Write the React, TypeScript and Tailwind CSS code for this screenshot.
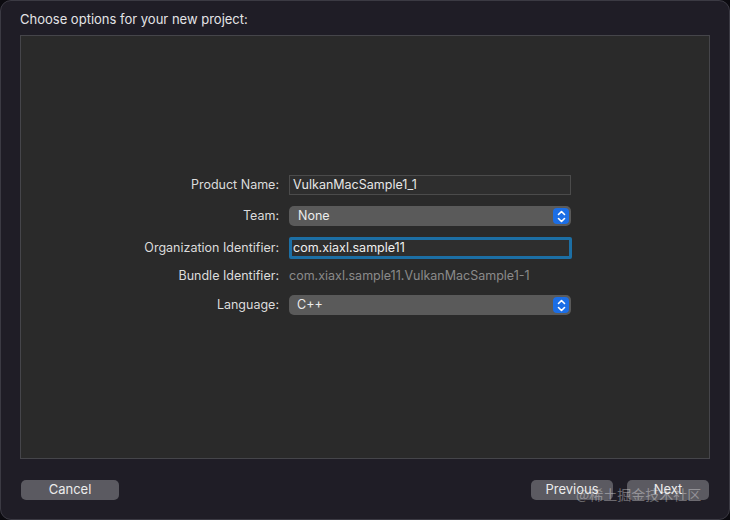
import React from "react";

function Stepper() {
  return (
    <div className="absolute right-[2px] top-[2px] bottom-[2px] w-[16px] rounded-[4px] bg-[#1b6ee6] flex items-center justify-center">
      <svg width="9" height="13" viewBox="0 0 9 13" fill="none" stroke="white" strokeWidth="1.6" strokeLinecap="round" strokeLinejoin="round">
        <path d="M1.5 4.5 L4.5 1.5 L7.5 4.5" />
        <path d="M1.5 8.5 L4.5 11.5 L7.5 8.5" />
      </svg>
    </div>
  );
}

function Label({ children }: { children: React.ReactNode }) {
  return <div className="w-[268px] text-right pr-[10px] text-[12.5px] text-[#dcdcdc]">{children}</div>;
}

export default function App() {
  return (
    <div className="w-[730px] h-[520px] bg-[#0c0b10] relative" style={{ fontFamily: "Inter, 'Noto Sans', sans-serif" }}>
      <div className="w-[730px] h-[520px] rounded-[11px] border border-[#3b3a43] bg-[#1f1d26] flex flex-col">
        <div className="h-[34px] pl-[19px] pt-[9px] text-[13px] text-[#e4e4e6]">Choose options for your new project:</div>
        <div className="mx-[19px] h-[424px] border border-[#45454a] bg-[#2a2a2a] flex flex-col pt-[139px]">
          <div className="flex items-center h-[20px]">
            <Label>Product Name:</Label>
            <div className="w-[282px] h-[20px] bg-[#2e2e2e] border border-[#4b4b4b] px-[3px] flex items-center text-[12.5px] text-[#e6e6e6]">VulkanMacSample1_1</div>
          </div>
          <div className="flex items-center h-[20px] mt-[11px]">
            <Label>Team:</Label>
            <div className="relative w-[282px] h-[20px] rounded-[5px] bg-[#5a5a5a] pl-[9px] flex items-center text-[12.5px] text-[#ececec]">
              None
              <Stepper />
            </div>
          </div>
          <div className="flex items-center h-[22px] mt-[11px]">
            <Label>Organization Identifier:</Label>
            <div className="w-[283px] h-[22px] bg-[#2e2e2e] border-[3px] border-[#1c6fa5] rounded-[2px] px-[1px] flex items-center text-[12.5px] text-[#f0f0f0]">com.xiaxl.sample11</div>
          </div>
          <div className="flex items-center h-[20px] mt-[7px]">
            <Label>Bundle Identifier:</Label>
            <div className="text-[12.5px] text-[#8a8a8a]">com.xiaxl.sample11.VulkanMacSample1-1</div>
          </div>
          <div className="flex items-center h-[20px] mt-[9px]">
            <Label>Language:</Label>
            <div className="relative w-[282px] h-[20px] rounded-[5px] bg-[#5a5a5a] pl-[8px] flex items-center text-[12.5px] text-[#ececec]">
              C++
              <Stepper />
            </div>
          </div>
        </div>
        <div className="flex items-center px-[20px] pt-[21px]">
          <div className="w-[98px] h-[20px] rounded-[5px] bg-[#5b5a61] flex items-center justify-center text-[13px] text-[#ececec]">Cancel</div>
          <div className="flex-1" />
          <div className="w-[82px] h-[20px] rounded-[5px] bg-[#5b5a61] flex items-center justify-center text-[13px] text-[#ececec]">Previous</div>
          <div className="w-[82px] h-[20px] rounded-[5px] bg-[#5b5a61] flex items-center justify-center text-[13px] text-[#ececec] ml-[14px]">Next</div>
        </div>
      </div>
      <div className="absolute left-[576px] top-[484px] text-[14px] text-[#ffffff]/35" style={{ fontFamily: "'Noto Sans CJK SC', sans-serif" }}>@稀土掘金技术社区</div>
    </div>
  );
}
